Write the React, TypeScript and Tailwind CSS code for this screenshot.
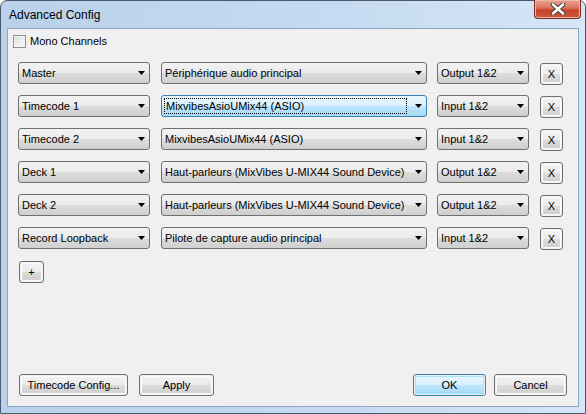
import React from "react";

const FONT = { fontFamily: '"Liberation Sans", Arial, sans-serif' };

type ComboProps = { label: string; width: string; focused?: boolean };

const Combo = ({ label, width, focused }: ComboProps) => (
  <div
    className={`${width} h-[22px] rounded-[3px] border flex items-center pl-[3px] pr-[4px] ${
      focused
        ? "border-[#3c7fb1] bg-[linear-gradient(#eaf6fd_0%,#d9f0fc_50%,#bee6fd_50%,#a7d9f5_100%)]"
        : "border-[#707070] bg-[linear-gradient(#f2f2f2_0%,#ebebeb_50%,#dddddd_50%,#cfcfcf_100%)]"
    }`}
  >
    <div className="flex-1 min-w-0 h-[16px] flex items-center">
      <span
        className={`text-[11px] leading-[14px] text-black whitespace-nowrap ${
          focused ? "flex-1 h-[16px] flex items-center border border-dotted border-black px-px -ml-px mr-[6px]" : ""
        }`}
      >
        {label}
      </span>
    </div>
    <svg width="7" height="4" viewBox="0 0 7 4" className="shrink-0 ml-[2px]">
      <path d="M0 0h7L3.5 4z" fill="#000" />
    </svg>
  </div>
);

type BtnProps = { label: string; width: string; primary?: boolean; className?: string };

const Btn = ({ label, width, primary, className = "" }: BtnProps) => (
  <div
    className={`${width} ${className} h-[22px] rounded-[3px] border p-px ${
      primary ? "border-[#3c7fb1]" : "border-[#707070]"
    }`}
  >
    <div
      className={`w-full h-full rounded-[2px] flex items-center justify-center text-[11px] text-black ${
        primary
          ? "bg-[linear-gradient(#eaf6fd_0%,#d9f0fc_50%,#bee6fd_50%,#a7d9f5_100%)] shadow-[inset_0_0_0_1px_#a8e3f8]"
          : "bg-[linear-gradient(#f2f2f2_0%,#ebebeb_50%,#dddddd_50%,#cfcfcf_100%)] shadow-[inset_0_0_0_1px_#fcfcfc]"
      }`}
    >
      {label}
    </div>
  </div>
);

const ROWS = [
  { ch: "Master", dev: "Périphérique audio principal", io: "Output 1&2" },
  { ch: "Timecode 1", dev: "MixvibesAsioUMix44 (ASIO)", io: "Input 1&2", focused: true },
  { ch: "Timecode 2", dev: "MixvibesAsioUMix44 (ASIO)", io: "Input 1&2" },
  { ch: "Deck 1", dev: "Haut-parleurs (MixVibes U-MIX44 Sound Device)", io: "Output 1&2" },
  { ch: "Deck 2", dev: "Haut-parleurs (MixVibes U-MIX44 Sound Device)", io: "Output 1&2" },
  { ch: "Record Loopback", dev: "Pilote de capture audio principal", io: "Input 1&2" },
];

export default function App() {
  return (
    <div className="w-[586px] h-[414px] bg-white" style={FONT}>
      <div className="w-full h-full flex flex-col rounded-t-[7px] border border-[#4a5a6e] bg-[linear-gradient(90deg,#b9d1ea_0%,#c6dbf1_60%,#d6e6f7_100%)] px-[6px] pb-[6px]">
        {/* Title bar */}
        <div className="h-[27px] flex items-start justify-between">
          <span className="mt-[6px] ml-[2px] text-[12px] leading-[16px] text-black">Advanced Config</span>
          <div className="w-[47px] h-[19px] -mt-px -mr-[2px] rounded-b-[4px] border border-[#7a2a22] border-t-0 bg-[linear-gradient(#e8a493_0%,#d8735d_45%,#c7442b_55%,#d0563b_100%)] flex items-center justify-center shadow-[inset_0_0_0_1px_#f0b8a8]">
            <svg width="16" height="12" viewBox="0 0 16 12">
              <path
                d="M3 1.5l10 9M13 1.5l-10 9"
                stroke="#3a3a3a"
                strokeWidth="4.4"
                strokeLinecap="round"
                fill="none"
              />
              <path
                d="M3 1.5l10 9M13 1.5l-10 9"
                stroke="#ffffff"
                strokeWidth="2.6"
                strokeLinecap="round"
                fill="none"
              />
            </svg>
          </div>
        </div>

        {/* Client area */}
        <div className="flex-1 flex flex-col border border-[#8da4bf] bg-[#f0f0f0] pl-[10px] pr-[11px] pb-[10px]">
          <label className="flex items-center gap-[4px] mt-[6px] -ml-[5px] h-[13px]">
            <span className="w-[13px] h-[13px] border border-[#8e8f8f] bg-[linear-gradient(135deg,#dcdcdc,#fbfbfb)] shadow-[inset_0_0_0_1px_#f4f4f4]" />
            <span className="text-[11px] leading-[13px] text-black">Mono Channels</span>
          </label>

          <div className="flex flex-col gap-[11px] mt-[14px]">
            {ROWS.map((r) => (
              <div key={r.ch} className="flex items-start h-[22px]">
                <Combo label={r.ch} width="w-[132px]" />
                <div className="ml-[11px]">
                  <Combo label={r.dev} width="w-[266px]" focused={r.focused} />
                </div>
                <div className="ml-[10px]">
                  <Combo label={r.io} width="w-[92px]" />
                </div>
                <Btn label="X" width="w-[23px]" className="ml-[11px] mt-px" />
              </div>
            ))}
          </div>

          <Btn label="+" width="w-[25px]" className="mt-[12px] ml-px" />

          <div className="mt-auto flex items-center">
            <Btn label="Timecode Config..." width="w-[109px]" className="ml-px" />
            <Btn label="Apply" width="w-[75px]" className="ml-[11px]" />
            <Btn label="OK" width="w-[73px]" primary className="ml-auto" />
            <Btn label="Cancel" width="w-[73px]" className="ml-[8px]" />
          </div>
        </div>
      </div>
    </div>
  );
}
